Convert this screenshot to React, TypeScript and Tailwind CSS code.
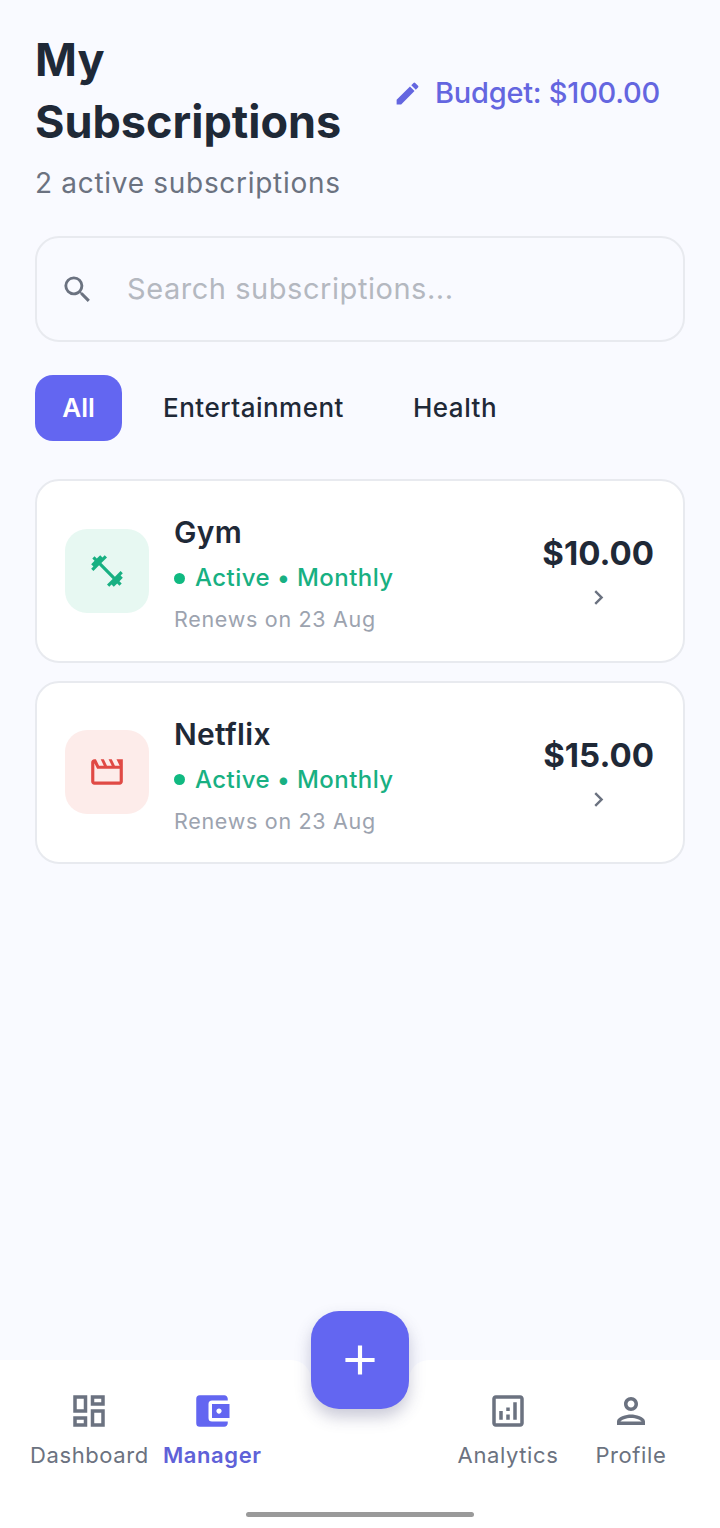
import {
  MdAccountBalanceWallet,
  MdAdd,
  MdChevronRight,
  MdEdit,
  MdFitnessCenter,
  MdOutlineAnalytics,
  MdOutlineDashboard,
  MdOutlineMovie,
  MdOutlinePerson,
  MdSearch,
} from "react-icons/md";
import type { ReactNode } from "react";

function SubscriptionCard(props: {
  name: string;
  price: string;
  tint: string;
  icon: ReactNode;
}) {
  return (
    <div className="flex h-[183.5px] items-center rounded-[24px] border-2 border-[#e8eaef] bg-white pl-[28px] pr-[29px]">
      <div className={`flex h-[84px] w-[84px] shrink-0 items-center justify-center rounded-[22px] ${props.tint}`}>
        {props.icon}
      </div>
      <div className="mt-[5px] ml-[25px] flex-1">
        <div className="text-[30px] leading-[38px] font-semibold tracking-[0.3px] text-[#1f2937]">{props.name}</div>
        <div className="mt-[11px] flex items-center text-[24px] leading-[32px] font-medium tracking-[0.45px] text-[#18b082]">
          <span className="mr-[10px] h-[11px] w-[11px] rounded-full bg-[#10b981]" />
          Active • Monthly
        </div>
        <div className="mt-[11px] text-[21.5px] leading-[28px] tracking-[0.7px] text-[#9ca3af]">Renews on 23 Aug</div>
      </div>
      <div className="mt-[4px] flex flex-col items-center">
        <div className="text-[33px] leading-[40px] font-bold text-[#1f2937]">{props.price}</div>
        <MdChevronRight className="mt-[10px] text-[#6b7280]" size={29} />
      </div>
    </div>
  );
}

function NavItem(props: { icon: ReactNode; label: string; active?: boolean; className: string }) {
  return (
    <div className={`flex flex-col items-center ${props.className}`}>
      {props.icon}
      <span
        className={`mt-[9px] text-[22px] leading-[28px] tracking-[0.6px] ${
          props.active ? "font-semibold text-[#5f61d8]" : "text-[#6b7280]"
        }`}
      >
        {props.label}
      </span>
    </div>
  );
}

export default function App() {
  return (
    <div className="relative flex h-[1528px] w-[720px] flex-col overflow-hidden bg-[#f9faff] font-['Inter',sans-serif]">
      <main className="flex-1 px-[35px] pt-[29px]">
        <div className="flex items-start justify-between pr-[25px]">
          <div>
            <h1 className="w-[320px] text-[45px] leading-[62px] font-bold text-[#1f2937]">My Subscriptions</h1>
            <p className="mt-[12px] text-[28px] leading-[36px] tracking-[0.7px] text-[#6b7280]">2 active subscriptions</p>
          </div>
          <div className="mt-[45px] flex items-center text-[#6466e0]">
            <MdEdit size={29} />
            <span className="ml-[13px] text-[29px] leading-[38px] font-medium tracking-[-0.25px]">Budget: $100.00</span>
          </div>
        </div>

        <div className="mt-[35px] flex h-[106px] items-center rounded-[24px] border-2 border-[#e8eaef] pl-[23px]">
          <MdSearch className="text-[#6b7280]" size={35} />
          <span className="ml-[32px] text-[29px] tracking-[0.55px] text-[#b4b8c0]">Search subscriptions...</span>
        </div>

        <div className="mt-[33px] flex items-center">
          <div className="flex h-[66px] w-[87px] items-center justify-center rounded-[18px] bg-[#6366f1] pb-[2px] text-[26px] font-semibold text-white">
            All
          </div>
          <div className="mb-[2px] ml-[41px] text-[26px] font-medium tracking-[0.5px] text-[#1f2937]">Entertainment</div>
          <div className="mb-[2px] ml-[69px] text-[26px] font-medium tracking-[0.5px] text-[#1f2937]">Health</div>
        </div>

        <div className="mt-[38px] flex flex-col gap-[18px]">
          <SubscriptionCard
            name="Gym"
            price="$10.00"
            tint="bg-[#e7f8f2]"
            icon={<MdFitnessCenter className="text-[#18b082]" size={38} />}
          />
          <SubscriptionCard
            name="Netflix"
            price="$15.00"
            tint="bg-[#fdecea]"
            icon={<MdOutlineMovie className="text-[#e04a45]" size={38} />}
          />
        </div>
      </main>

      <nav className="relative flex h-[168px] shrink-0 bg-white pt-[30px]">
        <NavItem className="ml-[30px]" label="Dashboard" icon={<MdOutlineDashboard className="text-[#6b7280]" size={42} />} />
        <NavItem className="ml-[14px]" label="Manager" active icon={<MdAccountBalanceWallet className="text-[#6366f1]" size={42} />} />
        <NavItem className="ml-[196px]" label="Analytics" icon={<MdOutlineAnalytics className="text-[#6b7280]" size={42} />} />
        <NavItem className="ml-[37px]" label="Profile" icon={<MdOutlinePerson className="text-[#6b7280]" size={42} />} />

        {/* cut-out round the add button */}
        <div className="absolute top-0 left-[291px] flex h-[24px] w-[138px] justify-between bg-[#f9faff]">
          <div className="w-[20px] rounded-tr-[20px] bg-white" />
          <div className="w-[20px] rounded-tl-[20px] bg-white" />
        </div>
        <div className="absolute top-[-49px] left-[311px] flex h-[98px] w-[98px] items-center justify-center rounded-[28px] bg-[#6366f1] shadow-[0_8px_16px_rgba(60,60,110,0.28)]">
          <MdAdd className="text-white" size={50} />
        </div>
        <div className="absolute bottom-[11px] left-[246px] h-[5px] w-[228px] rounded-full bg-[#9a9a9a]" />
      </nav>
    </div>
  );
}
